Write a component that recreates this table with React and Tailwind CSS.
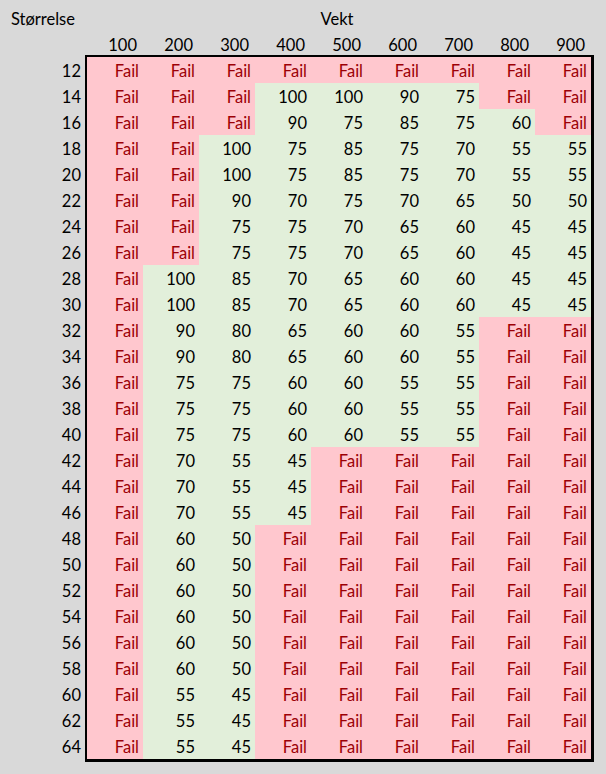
import React from "react";

const F = "F";
const cols = [100, 200, 300, 400, 500, 600, 700, 800, 900];
const data = [
  [12, [F, F, F, F, F, F, F, F, F]],
  [14, [F, F, F, 100, 100, 90, 75, F, F]],
  [16, [F, F, F, 90, 75, 85, 75, 60, F]],
  [18, [F, F, 100, 75, 85, 75, 70, 55, 55]],
  [20, [F, F, 100, 75, 85, 75, 70, 55, 55]],
  [22, [F, F, 90, 70, 75, 70, 65, 50, 50]],
  [24, [F, F, 75, 75, 70, 65, 60, 45, 45]],
  [26, [F, F, 75, 75, 70, 65, 60, 45, 45]],
  [28, [F, 100, 85, 70, 65, 60, 60, 45, 45]],
  [30, [F, 100, 85, 70, 65, 60, 60, 45, 45]],
  [32, [F, 90, 80, 65, 60, 60, 55, F, F]],
  [34, [F, 90, 80, 65, 60, 60, 55, F, F]],
  [36, [F, 75, 75, 60, 60, 55, 55, F, F]],
  [38, [F, 75, 75, 60, 60, 55, 55, F, F]],
  [40, [F, 75, 75, 60, 60, 55, 55, F, F]],
  [42, [F, 70, 55, 45, F, F, F, F, F]],
  [44, [F, 70, 55, 45, F, F, F, F, F]],
  [46, [F, 70, 55, 45, F, F, F, F, F]],
  [48, [F, 60, 50, F, F, F, F, F, F]],
  [50, [F, 60, 50, F, F, F, F, F, F]],
  [52, [F, 60, 50, F, F, F, F, F, F]],
  [54, [F, 60, 50, F, F, F, F, F, F]],
  [56, [F, 60, 50, F, F, F, F, F, F]],
  [58, [F, 60, 50, F, F, F, F, F, F]],
  [60, [F, 55, 45, F, F, F, F, F, F]],
  [62, [F, 55, 45, F, F, F, F, F, F]],
  [64, [F, 55, 45, F, F, F, F, F, F]],
];

export default function App() {
  return (
    <div
      className="w-[606px] h-[774px] bg-[#d9d9d9] text-[16.5px] text-black overflow-hidden"
      style={{ fontFamily: "Lato, 'Liberation Sans', sans-serif" }}
    >
      <div className="grid grid-cols-[85px_repeat(9,56px)] h-[32px] items-center pt-[6px]">
        <div className="pl-[11px] whitespace-nowrap">Størrelse</div>
        <div className="col-start-6 text-center">Vekt</div>
      </div>
      <div className="grid grid-cols-[85px_repeat(9,56px)] h-[23px] items-center pt-[1px]">
        <div />
        {cols.map((c) => (
          <div key={c} className="text-right pr-[4px]">
            {c}
          </div>
        ))}
      </div>
      <div className="flex">
        <div className="w-[85px] pt-[2px] flex flex-col">
          {data.map(([r]) => (
            <div key={r} className="h-[26px] flex items-center justify-end pr-[4px] pt-[3px]">
              {r}
            </div>
          ))}
        </div>
        <div className="border-l-2 border-t-2 border-r-[3px] border-b-[3px] border-black">
          <div className="grid grid-cols-[repeat(9,56px)]">
            {data.map(([r, vals]) =>
              vals.map((v, i) =>
                v === F ? (
                  <div
                    key={r + "-" + i}
                    className="h-[26px] bg-[#ffc7ce] text-[#9c0006] flex items-center justify-end pr-[4px] pt-[3px]"
                  >
                    Fail
                  </div>
                ) : (
                  <div
                    key={r + "-" + i}
                    className="h-[26px] bg-[#e2efda] text-black flex items-center justify-end pr-[4px] pt-[3px]"
                  >
                    {v}
                  </div>
                )
              )
            )}
          </div>
        </div>
      </div>
    </div>
  );
}
